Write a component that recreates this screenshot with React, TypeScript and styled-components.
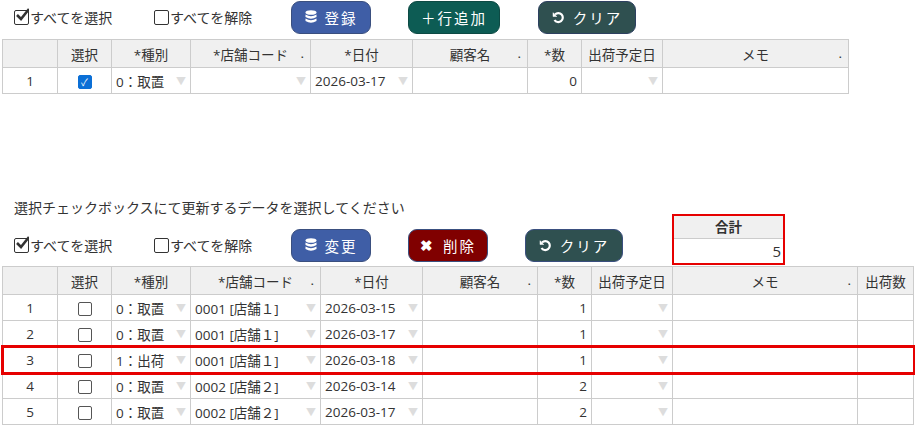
import React from 'react';
import styled, { createGlobalStyle } from 'styled-components';

const Global = createGlobalStyle`
  body { margin: 0; font-family: "Open Sans", "Noto Sans CJK JP", sans-serif; font-size: 13.5px; color: #333; background: #fff; }
`;

const Page = styled.div`
  padding: 0 2px;
  width: 913px;
`;

const Toolbar = styled.div`
  display: flex;
  align-items: center;
  height: 34px;
  position: relative;
`;

const CheckLabel = styled.label<{ $w: number }>`
  display: flex;
  align-items: center;
  gap: 1px;
  width: ${p => p.$w}px;
  font-size: 14px;
  color: #333;
`;

const Box = styled.span`
  width: 13px;
  height: 13px;
  border: 1.5px solid #333;
  border-radius: 2px;
  display: inline-flex;
  align-items: center;
  justify-content: center;
  position: relative;
`;

const Btn = styled.button<{ $bg: string; $w: number; $ml: number }>`
  background: ${p => p.$bg};
  color: #fff;
  border: 1px solid #3a4f7f;
  border-radius: 9px;
  height: 33px;
  width: ${p => p.$w}px;
  margin-left: ${p => p.$ml}px;
  font-family: inherit;
  font-size: 14.5px;
  letter-spacing: 2px;
  display: flex;
  align-items: center;
  justify-content: center;
  gap: 8px;
`;

const Grid = styled.table`
  border-collapse: collapse;
  table-layout: fixed;
  td, th { border: 1px solid #ccc; padding: 0 4px; height: 25px; white-space: nowrap; overflow: hidden; }
  th { background: #f0f0f0; font-weight: normal; height: 27px; position: relative; }
`;

const Dot = styled.span`
  position: absolute; right: 6px; top: 4px;
`;

const Cell = styled.td<{ $align?: string }>`
  text-align: ${p => p.$align || 'left'};
`;

const Row = styled.tr<{ $hl?: boolean }>`
  outline: ${p => (p.$hl ? '3px solid #e60000' : 'none')};
  outline-offset: -1px;
`;

const Sel = styled.div`
  display: flex;
  justify-content: space-between;
  align-items: center;
`;

const Arrow = styled.span`
  color: #ddd;
  font-size: 10px;
`;

const SmallBox = styled.span<{ $on?: boolean }>`
  display: inline-block;
  width: 12px;
  height: 12px;
  border-radius: 2px;
  border: 1px solid ${p => (p.$on ? '#0b6fd6' : '#555')};
  background: ${p => (p.$on ? '#0b6fd6' : '#fff')};
  vertical-align: middle;
  color: #fff;
  font-size: 10px;
  line-height: 12px;
  text-align: center;
`;

const Message = styled.div`
  margin: 103px 0 0 12px;
  font-size: 14px;
  height: 20px;
`;

const Total = styled.div`
  position: absolute;
  left: 670px;
  top: -14px;
  width: 109px;
  border: 2px solid #e60000;
  background: #fff;
`;

const TotalHead = styled.div`
  background: #f0f0f0;
  text-align: center;
  font-weight: bold;
  height: 22px;
  line-height: 22px;
  border-bottom: 1px solid #ccc;
`;

const TotalVal = styled.div`
  text-align: right;
  font-size: 15px;
  height: 24px;
  line-height: 24px;
  padding-right: 2px;
`;

const Check = () => (
  <svg width="14" height="14" viewBox="0 0 14 14" style={{ position: 'absolute', left: 0, top: -3 }}>
    <path d="M2 7 L6 11 L14 1" stroke="#333" strokeWidth="2.6" fill="none" />
  </svg>
);

const Db = () => (
  <svg width="12" height="14" viewBox="0 0 12 14" fill="#fff">
    <ellipse cx="6" cy="2.5" rx="5.5" ry="2.3" />
    <path d="M0.5 4.5 Q6 8 11.5 4.5 V7 Q6 10.5 0.5 7Z" />
    <path d="M0.5 8.5 Q6 12 11.5 8.5 V11 Q6 14.5 0.5 11Z" />
  </svg>
);

const Undo = () => (
  <svg width="13" height="13" viewBox="0 0 13 13" fill="none" stroke="#fff" strokeWidth="2.2">
    <path d="M3 3.5 A4.5 4.5 0 1 1 2.5 9" />
    <path d="M1 1.5 L1 5.5 L5 5.5" fill="#fff" strokeWidth="0.5" />
  </svg>
);

const SelectAll = () => (
  <>
    <CheckLabel $w={140} style={{ marginLeft: 12 }}>
      <Box><Check /></Box>すべてを選択
    </CheckLabel>
    <CheckLabel $w={137}>
      <Box />すべてを解除
    </CheckLabel>
  </>
);

const Drop = ({ v }: { v: string }) => (
  <Sel><span>{v}</span><Arrow>▼</Arrow></Sel>
);

const rows = [
  ['1', false, '0：取置', '0001 [店舗１]', '2026-03-15', '1'],
  ['2', false, '0：取置', '0001 [店舗１]', '2026-03-17', '1'],
  ['3', false, '1：出荷', '0001 [店舗１]', '2026-03-18', '1'],
  ['4', false, '0：取置', '0002 [店舗２]', '2026-03-14', '2'],
  ['5', false, '0：取置', '0002 [店舗２]', '2026-03-17', '2'],
] as const;

export default function App() {
  return (
    <Page>
      <Global />
      <Toolbar>
        <SelectAll />
        <Btn $bg="#3f5ea6" $w={80} $ml={0}><Db />登録</Btn>
        <Btn $bg="#0d5c54" $w={92} $ml={37} style={{ borderColor: '#0d4a44' }}>＋行追加</Btn>
        <Btn $bg="#2f5050" $w={98} $ml={38} style={{ borderColor: '#2d4060' }}><Undo />クリア</Btn>
      </Toolbar>
      <Grid style={{ width: 846, marginTop: 5 }}>
        <colgroup>
          {[55, 54, 79, 120, 102, 115, 54, 81, 186].map((w, i) => <col key={i} style={{ width: w }} />)}
        </colgroup>
        <thead>
          <tr>
            <th></th><th>選択</th><th>*種別</th><th>*店舗コード<Dot>.</Dot></th><th>*日付</th>
            <th>顧客名<Dot>.</Dot></th><th>*数</th><th>出荷予定日</th><th>メモ<Dot>.</Dot></th>
          </tr>
        </thead>
        <tbody>
          <tr>
            <Cell $align="center">1</Cell>
            <Cell $align="center"><SmallBox $on>✓</SmallBox></Cell>
            <Cell><Drop v="0：取置" /></Cell>
            <Cell><Drop v="" /></Cell>
            <Cell><Drop v="2026-03-17" /></Cell>
            <Cell></Cell>
            <Cell $align="right">0</Cell>
            <Cell><Drop v="" /></Cell>
            <Cell></Cell>
          </tr>
        </tbody>
      </Grid>
      <Message>選択チェックボックスにて更新するデータを選択してください</Message>
      <Toolbar style={{ marginTop: 11 }}>
        <SelectAll />
        <Btn $bg="#3f5ea6" $w={80} $ml={0}><Db />変更</Btn>
        <Btn $bg="#800000" $w={80} $ml={37}><span style={{ fontWeight: 'bold' }}>✖</span>削除</Btn>
        <Btn $bg="#2f5050" $w={98} $ml={37}><Undo />クリア</Btn>
        <Total>
          <TotalHead>合計</TotalHead>
          <TotalVal>5</TotalVal>
        </Total>
      </Toolbar>
      <Grid style={{ width: 911, marginTop: 4 }}>
        <colgroup>
          {[55, 54, 79, 130, 102, 115, 54, 81, 185, 56].map((w, i) => <col key={i} style={{ width: w }} />)}
        </colgroup>
        <thead>
          <tr>
            <th></th><th>選択</th><th>*種別</th><th>*店舗コード<Dot>.</Dot></th><th>*日付</th>
            <th>顧客名<Dot>.</Dot></th><th>*数</th><th>出荷予定日</th><th>メモ<Dot>.</Dot></th><th>出荷数</th>
          </tr>
        </thead>
        <tbody>
          {rows.map(r => (
            <Row key={r[0]} $hl={r[0] === '3'}>
              <Cell $align="center">{r[0]}</Cell>
              <Cell $align="center"><SmallBox /></Cell>
              <Cell><Drop v={r[2]} /></Cell>
              <Cell><Drop v={r[3]} /></Cell>
              <Cell><Drop v={r[4]} /></Cell>
              <Cell></Cell>
              <Cell $align="right">{r[5]}</Cell>
              <Cell><Drop v="" /></Cell>
              <Cell></Cell>
              <Cell></Cell>
            </Row>
          ))}
        </tbody>
      </Grid>
    </Page>
  );
}
